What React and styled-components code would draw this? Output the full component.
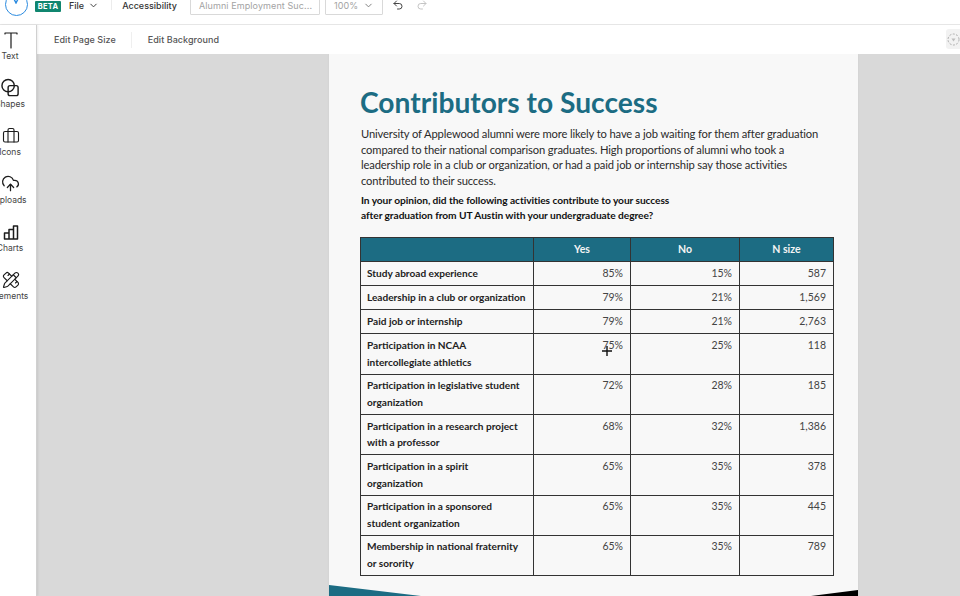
import React from "react";
import styled, { createGlobalStyle } from "styled-components";
import { Undo2, Redo2, ChevronDown, PencilRuler, Briefcase, CloudUpload } from "lucide-react";

const Global = createGlobalStyle`
  html, body { margin: 0; padding: 0; width: 960px; height: 596px; overflow: hidden; background: #fff; }
  #root { width: 960px; height: 596px; }
  * { box-sizing: border-box; }
`;
const Shell = styled.div`
  width: 960px; height: 596px; display: flex; flex-direction: column; overflow: hidden;
  font-family: Inter, "Liberation Sans", sans-serif; color: #333;
`;
const TopBar = styled.header`
  height: 25px; flex: none; display: flex; align-items: flex-start; background: #fff;
  border-bottom: 1px solid #e6e6e6; overflow: hidden;
`;
const TopRow = styled.div`
  display: flex; align-items: center; height: 18px; margin-top: -7px;
`;
const Logo = styled.div`
  width: 23px; height: 23px; border: 1.5px solid #2b8be0; border-radius: 50%;
  margin: 4px 0 0 5px; position: relative; flex: none;
`;
const LogoTick = styled.svg`
  position: absolute; left: 5px; top: 0;
`;
const Beta = styled.span`
  margin-left: 7px; width: 26px; height: 11px; background: #10866f; color: #fff; border-radius: 1px;
  font-size: 7.5px; font-weight: 700; letter-spacing: .3px; display: flex; align-items: center; justify-content: center;
  margin-top: 8px; flex: none;
`;
const MenuItem = styled.span`
  font-size: 9px; font-weight: 500; color: #333; display: flex; align-items: center; gap: 4px;
  margin-left: ${p => p.$ml}px; margin-top: 7px;
`;
const VRule = styled.span`
  width: 1px; height: 14px; background: #ececec; margin-left: 12px; margin-top: 2px;
`;
const Field = styled.div`
  height: 20px; width: ${p => p.$w}px; margin-left: ${p => p.$ml}px; border: 1px solid #d9d9d9; border-radius: 1px;
  margin-top: 5px; padding: 1px 8px 0; font-size: 9px; color: #a3a3a3; display: flex; align-items: center;
  justify-content: space-between; white-space: nowrap; letter-spacing: .1px;
`;
const IconSlot = styled.span`
  margin-left: ${p => p.$ml}px; margin-top: 6px; display: flex; color: ${p => p.$c};
`;
const Body = styled.div`
  flex: 1; display: flex; min-height: 0;
`;
const Sidebar = styled.aside`
  width: 37px; flex: none; background: #fff; border-right: 1px solid #d0d0d0; overflow: hidden; position: relative; z-index: 1;
  box-shadow: 1px 0 2px rgba(0,0,0,.08);
`;
const ToolList = styled.div`
  width: 56px; margin-left: -18px; padding-top: 4px; display: flex; flex-direction: column;
`;
const Tool = styled.div`
  height: 48px; display: flex; flex-direction: column; align-items: center; color: #1c1c1c; padding-top: 1px;
`;
const ToolIcon = styled.div`
  height: 19px; width: 19px; display: flex; align-items: center; justify-content: center; margin-left: 1px;
`;
const ToolLabel = styled.span`
  font-size: 8.5px; color: #444; line-height: 12px; margin-top: 1px;
`;
const Main = styled.main`
  flex: 1; min-width: 0; display: flex; flex-direction: column;
`;
const SubBar = styled.div`
  height: 29px; flex: none; background: #fff; display: flex; align-items: center; padding-left: 17px; position: relative;
`;
const SubItem = styled.span`
  font-size: 9px; font-weight: 500; color: #555; letter-spacing: .05px;
`;
const SubRule = styled.span`
  width: 1px; height: 16px; background: #efefef; margin: 0 15.5px;
`;
const Widget = styled.div`
  position: absolute; right: -4px; top: 4px; width: 18px; height: 20px; background: #f2f2f2; border-radius: 3px;
  display: flex; align-items: center; justify-content: center; padding-right: 3px;
`;
const Canvas = styled.div`
  flex: 1; min-height: 0; background: #d9d9d9; overflow: hidden; padding-left: 292px;
`;
const Page = styled.section`
  width: 529px; height: 542px; background: #f8f8f8; position: relative; overflow: hidden; padding: 31px 24px 0 31px;
  font-family: Lato, sans-serif; box-shadow: 0 0 2px rgba(0,0,0,.06);
`;
const Title = styled.h1`
  margin: 0; font-size: 28.2px; line-height: 34px; font-weight: 700; color: #1c6c83; white-space: nowrap;
`;
const Para = styled.p`
  margin: 7px 0 0 1px; font-size: 11.2px; line-height: 15.6px; letter-spacing: -.135px; color: #2b2b2b; white-space: nowrap;
`;
const Question = styled.p`
  margin: 5px 0 0 1px; font-size: 10.2px; line-height: 15px; letter-spacing: -.07px; font-weight: 700; color: #111; white-space: nowrap;
`;
const Table = styled.table`
  margin-top: 14px; width: 474px; table-layout: fixed; border-collapse: collapse; font-size: 10.5px; line-height: 16.9px; color: #2b2b2b;
  & th, & td { border: 1px solid #333; vertical-align: top; }
`;
const Head = styled.th`
  background: #1c6c83; color: #f4f4f4; height: 24px; font-weight: 700; padding: 3px 0 0; text-align: center; font-size: 10.5px;
`;
const RowName = styled.td`
  height: 24px; padding: 2.5px 0 3px 6px; font-size: 10.1px; font-weight: 700; color: #222; text-align: left; white-space: nowrap;
`;
const Num = styled.td`
  padding: 2.5px 7px 3px 0; text-align: right; color: #444;
`;
const Wedge = styled.svg`
  position: absolute; left: 0; bottom: 0;
`;
const Cursor = styled.svg`
  position: absolute; left: 273px; top: 292px;
`;

const rows = [
  ["Study abroad experience", "85%", "15%", "587"],
  ["Leadership in a club or organization", "79%", "21%", "1,569"],
  ["Paid job or internship", "79%", "21%", "2,763"],
  [["Participation in NCAA", "intercollegiate athletics"], "75%", "25%", "118"],
  [["Participation in legislative student", "organization"], "72%", "28%", "185"],
  [["Participation in a research project", "with a professor"], "68%", "32%", "1,386"],
  [["Participation in a spirit", "organization"], "65%", "35%", "378"],
  [["Participation in a sponsored", "student organization"], "65%", "35%", "445"],
  [["Membership in national fraternity", "or sorority"], "65%", "35%", "789"],
];
const s = { fill: "none", stroke: "currentColor", strokeWidth: 1.5, strokeLinecap: "round", strokeLinejoin: "round" };
const tools = [
  ["Text", <svg width="16" height="18" viewBox="0 0 16 18" {...s} strokeWidth="1.2"><path d="M2 3V2h12v1M8 2v15" /></svg>],
  ["Shapes", <svg width="20" height="20" viewBox="0 0 20 20" {...s}><circle cx="7.500" cy="7.500" r="6.500" /><rect x="7.500" y="7.500" width="10.500" height="10.500" rx="2" /></svg>],
  ["Icons", <Briefcase size={18} strokeWidth={1.5} />],
  ["Uploads", <CloudUpload size={19} strokeWidth={1.6} />],
  ["Charts", <svg width="18" height="18" viewBox="0 0 18 18" {...s}><path d="M2.500 16V10h4.500v6zM7 16V6.500h4.500V16zM11.500 16V3h4v13zM2.500 16h13" /></svg>],
  ["Elements", <PencilRuler size={18} strokeWidth={1.5} />],
];

export default function App() {
  return (
    <Shell>
      <Global />
      <TopBar>
        <TopRow>
          <Logo>
            <LogoTick width="10" height="10" viewBox="0 0 10 10" fill="none" stroke="#2b8be0" strokeWidth="1.4"><path d="M1 1l4 8 4-8" /></LogoTick>
          </Logo>
          <Beta>BETA</Beta>
          <MenuItem $ml={8}>File <ChevronDown size={11} /></MenuItem>
          <VRule />
          <MenuItem $ml={10}>Accessibility</MenuItem>
          <Field $w={130} $ml={13}>Alumni Employment Suc...</Field>
          <Field $w={58} $ml={5}>100% <ChevronDown size={11} color="#777" /></Field>
          <IconSlot $ml={9} $c="#444"><Undo2 size={12} /></IconSlot>
          <IconSlot $ml={12} $c="#c4c4c4"><Redo2 size={12} /></IconSlot>
        </TopRow>
      </TopBar>
      <Body>
        <Sidebar>
          <ToolList>
            {tools.map(([label, icon]) => (
              <Tool key={label}>
                <ToolIcon>{icon}</ToolIcon>
                <ToolLabel>{label}</ToolLabel>
              </Tool>
            ))}
          </ToolList>
        </Sidebar>
        <Main>
          <SubBar>
            <SubItem>Edit Page Size</SubItem>
            <SubRule />
            <SubItem>Edit Background</SubItem>
            <Widget>
              <svg width="13" height="13" viewBox="0 0 13 13" fill="none" stroke="#aaa" strokeWidth="1" strokeDasharray="2 1.500"><circle cx="6.500" cy="6.500" r="5.500" /><path d="M4.500 5.500h4l-2 3z" fill="#bbb" stroke="none" /></svg>
            </Widget>
          </SubBar>
          <Canvas>
            <Page>
              <Title>Contributors to Success</Title>
              <Para>
                University of Applewood alumni were more likely to have a job waiting for them after graduation<br />
                compared to their national comparison graduates. High proportions of alumni who took a<br />
                leadership role in a club or organization, or had a paid job or internship say those activities<br />
                contributed to their success.
              </Para>
              <Question>
                In your opinion, did the following activities contribute to your success<br />
                after graduation from UT Austin with your undergraduate degree?
              </Question>
              <Table>
                <colgroup>
                  <col style={{ width: 173 }} />
                  <col style={{ width: 97 }} />
                  <col style={{ width: 109 }} />
                  <col style={{ width: 94 }} />
                </colgroup>
                <thead>
                  <tr><Head /><Head>Yes</Head><Head>No</Head><Head>N size</Head></tr>
                </thead>
                <tbody>
                  {rows.map(([name, a, b, c]) => (
                    <tr key={a + b + c}>
                      <RowName>
                        {Array.isArray(name) ? <>{name[0]}<br />{name[1]}</> : name}
                      </RowName>
                      <Num>{a}</Num><Num>{b}</Num><Num>{c}</Num>
                    </tr>
                  ))}
                </tbody>
              </Table>
              <Cursor width="10" height="10" viewBox="0 0 10 10" fill="none" stroke="#111" strokeWidth="1.4"><path d="M5 0v10M0 5h10" /></Cursor>
              <Wedge width="529" height="12" viewBox="0 0 529 12">
                <path d="M0 1L92 12H0z" fill="#1c6c83" />
                <path d="M529 6V12H482z" fill="#000" />
              </Wedge>
            </Page>
          </Canvas>
        </Main>
      </Body>
    </Shell>
  );
}
